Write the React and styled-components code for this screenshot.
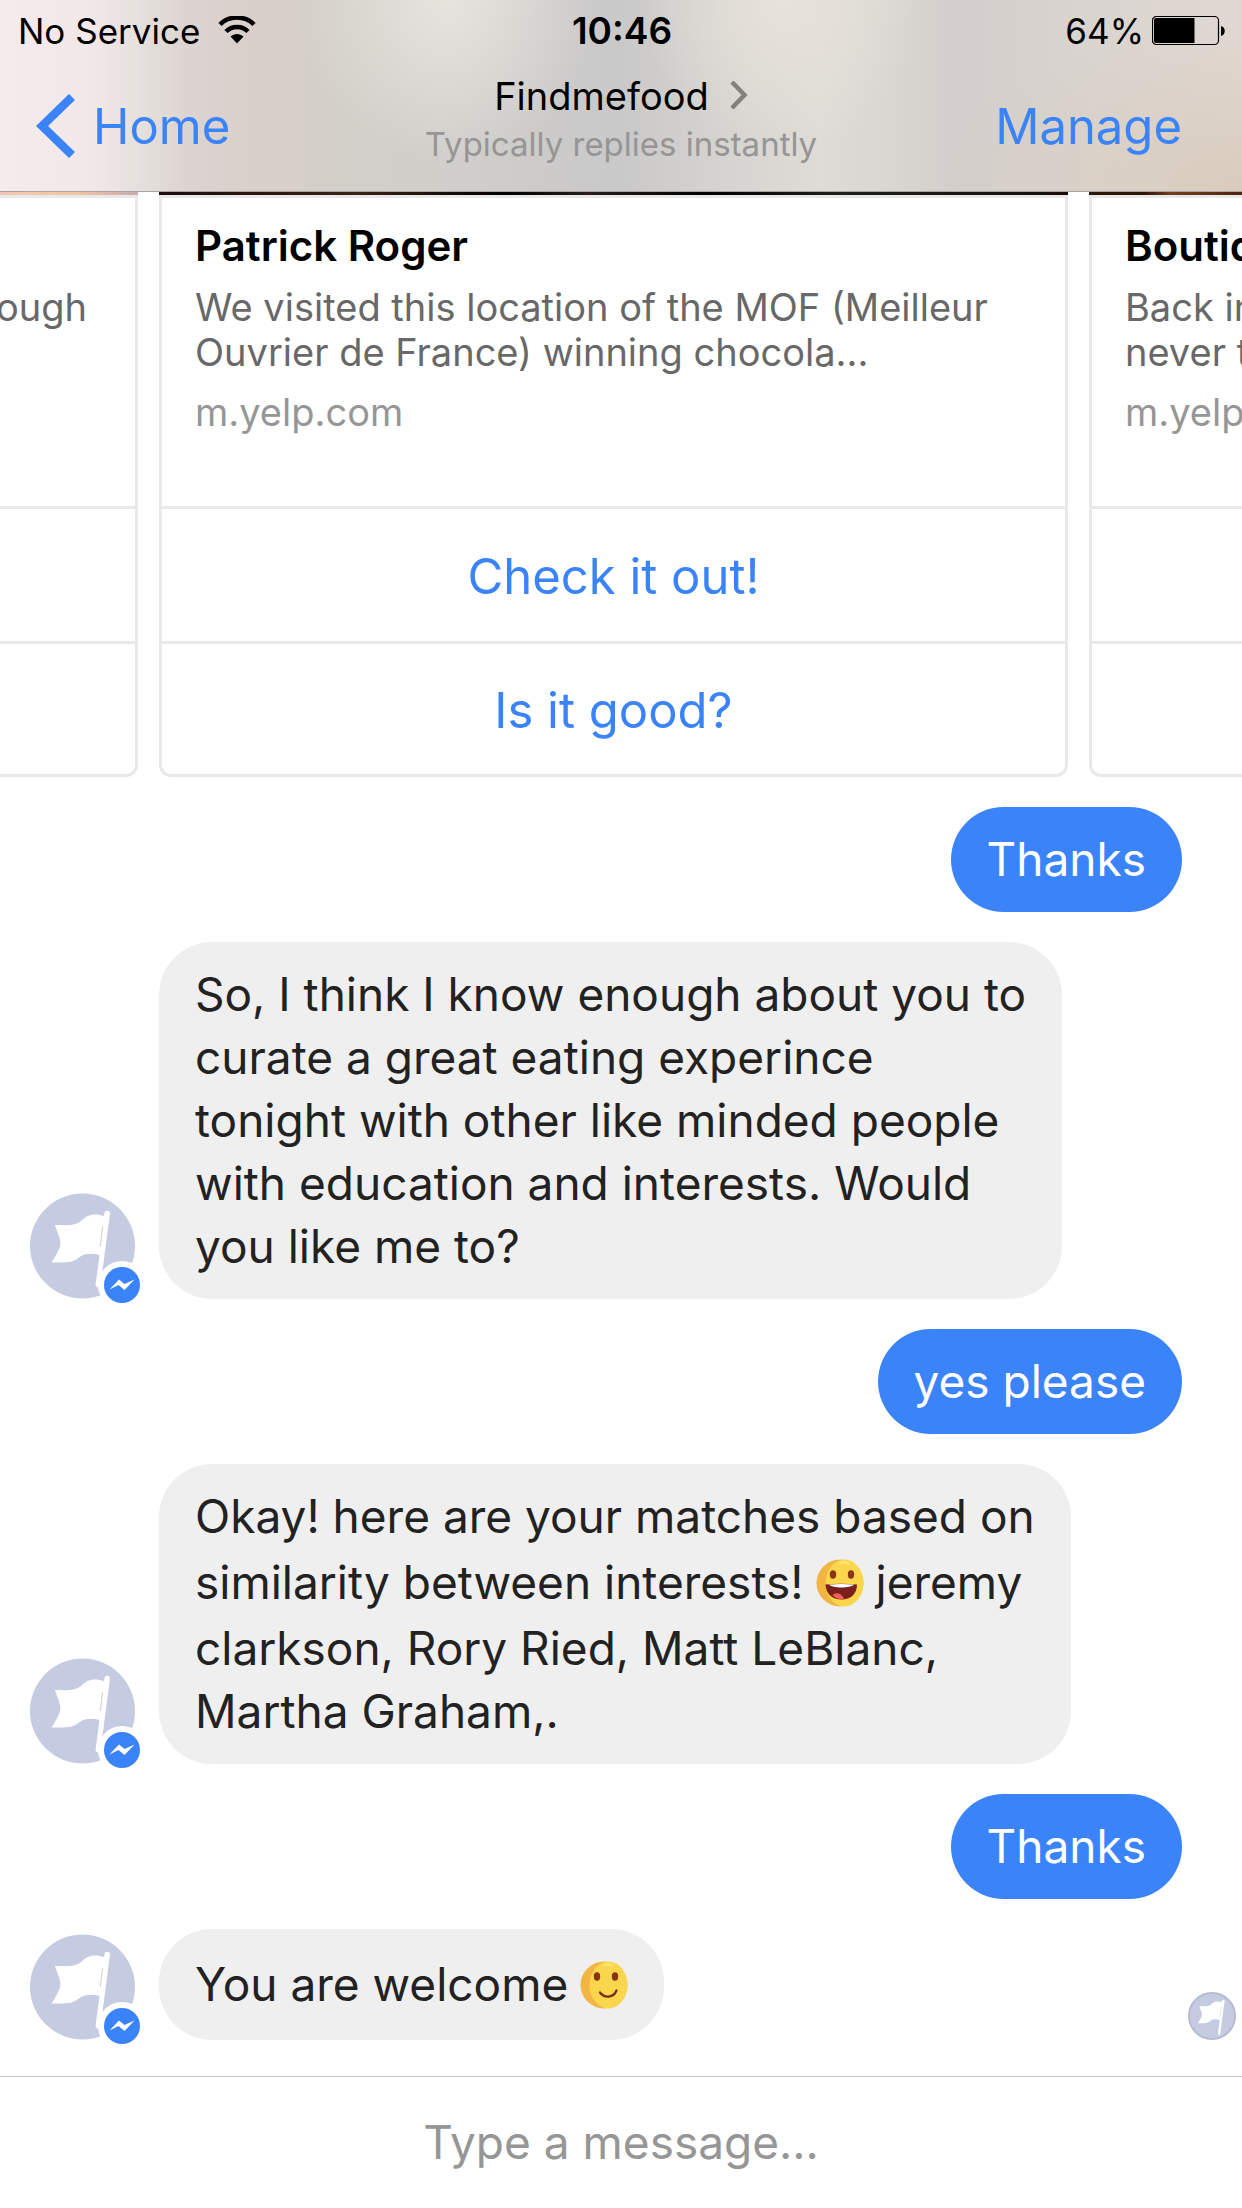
import React from "react";
import styled, { createGlobalStyle } from "styled-components";

const GlobalStyle = createGlobalStyle`
  *, *::before, *::after { box-sizing: border-box; }
  body {
    margin: 0;
    background: #fff;
    color: #222;
    font-family: Inter, "Liberation Sans", sans-serif;
    font-size: 46px;
    line-height: 63px;
  }
  button, input { font: inherit; color: inherit; }
  h1, h2, p { margin: 0; font: inherit; }
`;

const BLUE = "#3b83f8";

const Screen = styled.div`
  min-height: 100vh;
  display: flex;
  flex-direction: column;
  overflow: hidden;
`;

const Header = styled.header`
  height: 192px;
  display: flex;
  flex-direction: column;
  background:
    radial-gradient(ellipse 150px 160px at 36% 0, #e6e4dd 0%, #e6e4dd00 100%),
    radial-gradient(ellipse 140px 150px at 63% 0, #e7e3da 0%, #e7e3da00 100%),
    radial-gradient(ellipse 300px 170px at 100% 100%, #d9ccbd 0%, #d9ccbd00 100%),
    linear-gradient(90deg, #f6ebeb 0%, #f3e8e9 7%, #e6e1de 11%, #dcd4d0 15%, #d8cfca 21%, #d3cfc9 28%,
      #d1cfcb 36%, #cccbca 44%, #cac9c9 50%, #d4d2cf 57%, #dfdcd7 66%, #dad7d3 71%, #d3cecb 77%,
      #d9d4d0 87%, #e1d8d2 100%);
  box-shadow: inset 0 -1px 0 #a9a4a2;
`;

const StatusBar = styled.div`
  height: 62px;
  padding: 0 16px 0 18px;
  display: grid;
  grid-template-columns: 1fr auto 1fr;
  align-items: center;
  color: #000;
  font-size: 35px;
  line-height: 62px;
`;

const StatusGroup = styled.div`
  display: flex;
  align-items: center;
  justify-content: ${(p) => (p.$end ? "flex-end" : "flex-start")};
  gap: ${(p) => (p.$end ? 8 : 18)}px;
`;

const Clock = styled.time`
  font-size: 37px;
  font-weight: 600;
`;

const NavBar = styled.nav`
  flex: 1;
  padding: 0 36px;
  display: grid;
  grid-template-columns: 1fr auto 1fr;
`;

const NavButton = styled.button`
  justify-self: ${(p) => (p.$end ? "end" : "start")};
  align-self: start;
  height: 128px;
  padding: 0 ${(p) => (p.$end ? 24 : 0)}px 0 0;
  border: 0;
  background: none;
  display: flex;
  align-items: center;
  gap: 18px;
  color: ${BLUE};
  font-size: 49px;
`;

const NavTitle = styled.div`
  display: flex;
  flex-direction: column;
  align-items: center;
  padding-top: 10px;
`;

const Title = styled.h1`
  display: flex;
  align-items: center;
  gap: 21px;
  color: #000;
  font-size: 38px;
  line-height: 48px;
`;

const Subtitle = styled.p`
  color: #969594;
  font-size: 33px;
  line-height: 48px;
`;

const Carousel = styled.section`
  display: flex;
  justify-content: center;
  gap: 21px;
  padding-right: 15px;
`;

const Card = styled.article`
  flex: 0 0 calc(100% - 318px);
  display: flex;
  flex-direction: column;
  border: 3px solid #e9e9e9;
  border-top: 0;
  border-radius: 0 0 12px 12px;
`;

const Photo = styled.div`
  height: 3px;
  margin: 0 -3px;
  background: ${(p) => p.$tone};
`;

const CardBody = styled.div`
  height: 311px;
  padding: 21px 48px 0 33px;
  border-top: 3px solid #e9e9e9;
  text-align: ${(p) => (p.$end ? "right" : "left")};
`;

const CardTitle = styled.h2`
  min-height: 60px;
  color: #000;
  font-size: 42px;
  font-weight: 600;
  line-height: 54px;
  white-space: nowrap;
`;

const CardText = styled.p`
  padding-top: 6px;
  color: #686868;
  font-size: 38px;
  line-height: 45px;
  white-space: nowrap;
`;

const CardLink = styled.a`
  display: block;
  padding-top: 15px;
  color: #969696;
  font-size: 38px;
  line-height: 45px;
  text-decoration: none;
`;

const CardAction = styled.button`
  height: 135px;
  padding: 2px 0 0;
  border: 0;
  border-top: 3px solid #e9e9e9;
  background: none;
  color: ${BLUE};
  font-size: 49px;
  &:last-child { height: 133px; }
`;

const Thread = styled.main`
  position: relative;
  flex: 1;
  display: flex;
  flex-direction: column;
  gap: 30px;
  padding: 30px 60px 36px 30px;
`;

const Row = styled.div`
  display: flex;
  align-items: flex-end;
  justify-content: ${(p) => (p.$mine ? "flex-end" : "flex-start")};
  gap: 24px;
`;

const Bubble = styled.p`
  padding: 21px 36px;
  border-radius: 53px;
  background: ${(p) => (p.$mine ? BLUE : "#efefef")};
  color: ${(p) => (p.$mine ? "#fff" : "#222")};
  white-space: nowrap;
`;

const Line = styled.span`
  display: flex;
  align-items: center;
  gap: 12px;
`;

const EmojiBox = styled.span`
  height: 69px;
  display: flex;
  align-items: center;
`;

const Seen = styled.div`
  position: absolute;
  right: 6px;
  bottom: 36px;
  display: flex;
`;

const Composer = styled.form`
  height: 132px;
  border-top: 1px solid #c8c8c8;
  display: flex;
`;

const MessageInput = styled.input`
  flex: 1;
  min-width: 0;
  border: 0;
  padding: 0;
  outline: 0;
  background: none;
  text-align: center;
  &::placeholder { color: #969696; opacity: 1; }
`;

const Flag = () => (
  <g fill="#fff">
    <path d="M25 31c10 0 17 1 23-2 5-3 7-7 13-8 5-1 9 0 13 1l.6-3.500c.4-2.400 5.800-2.400 5.400 1L70.500 92c-.5 2-5 2-5-1L69.500 61c-7-2-14-2-20 2-6 5-11 6-28 5.500 3-5 6-9 8.500-16 2-6-3-14-5-21.500z" />
    <path d="M72.600 33 70.300 52" stroke="#d3d3da" strokeWidth="1.200" fill="none" />
  </g>
);

const Avatar = () => (
  <svg width="105" height="105" viewBox="0 0 105 105" overflow="visible" role="img" aria-label="Findmefood">
    <circle cx="52.500" cy="52" r="52.500" fill="#c5cbe0" />
    <Flag />
    <circle cx="92" cy="91" r="24" fill="#fff" />
    <circle cx="92" cy="91" r="18" fill={BLUE} />
    <path d="M79.500 95.500 89 85.500l5.500 4.500 10-4.500L94.500 96l-6-5z" fill="#fff" />
  </svg>
);

const SeenAvatar = () => (
  <svg width="48" height="48" viewBox="0 0 105 105" role="img" aria-label="Seen">
    <circle cx="52.500" cy="52.500" r="50.500" fill="#c5cbe0" stroke="#b3b9cf" strokeWidth="4" />
    <Flag />
  </svg>
);

const Face = ({ grin }) => (
  <svg width="48" height="48" viewBox="0 0 48 48" role="img" aria-label={grin ? "grinning" : "smiling"}>
    <circle cx="24" cy="24" r="23.500" fill="#f2b544" />
    <ellipse cx="28.500" cy="24" rx="19" ry="23.500" fill="#f9d64c" />
    <path d="M24 4.500c2-1.800 6-1.800 8 0" stroke="#fdea7a" strokeWidth="2" fill="none" strokeLinecap="round" />
    <ellipse cx="17" cy="15.500" rx="3.200" ry="4.200" fill="#8a3416" />
    <ellipse cx="35" cy="15.500" rx="3.200" ry="4.200" fill="#8a3416" />
    {grin ? (
      <>
        <path d="M9.500 25.500c10-1 21-1 31.500 0 0 9-6 15-15.500 15s-15.500-6-16-15z" fill="#7a1f1d" />
        <path d="M13 25.500c8-.8 17-.8 25 0-3 4-22 4-25 0z" fill="#fff" />
        <path d="M16.500 36c4-3.500 9-2 11.500 4-4 1-8.500-.5-11.500-4z" fill="#f2605a" />
      </>
    ) : (
      <path d="M20 31.500c4.500 6 13.500 5.500 16.500-2" stroke="#7b2a17" strokeWidth="2.200" fill="none" strokeLinecap="round" />
    )}
  </svg>
);

const Emoji = ({ grin }) => (
  <EmojiBox>
    <Face grin={grin} />
  </EmojiBox>
);

const Wifi = () => (
  <svg width="38" height="30" viewBox="0 0 38 30" aria-hidden="true">
    <path d="M2 8.500C11-.8 27-.8 36 8.500" fill="none" stroke="#000" strokeWidth="4.500" />
    <path d="M8 15.500c6-6 16-6 22 0" fill="none" stroke="#000" strokeWidth="4.500" />
    <path d="M12.500 20.500c4-3.500 9-3.500 13 0L19 27.500z" />
  </svg>
);

const Battery = () => (
  <svg width="74" height="30" viewBox="0 0 74 30" aria-hidden="true">
    <rect x=".5" y=".5" width="66" height="28" rx="4" fill="none" stroke="#000" strokeWidth="1.200" />
    <path d="M4 2h38.500v25H4a2 2 0 0 1-2-2V4a2 2 0 0 1 2-2z" />
    <path d="M69 10c5 1 5 9 0 10z" />
  </svg>
);

const BackChevron = () => (
  <svg width="39" height="64" viewBox="0 0 39 64" aria-hidden="true">
    <path d="M36 3 6 32l30 29" fill="none" stroke={BLUE} strokeWidth="8.500" />
  </svg>
);

const TitleChevron = () => (
  <svg width="18" height="30" viewBox="0 0 18 30" aria-hidden="true">
    <path d="M2 1l12.500 13L2 27" fill="none" stroke="#86807d" strokeWidth="4.500" />
  </svg>
);

const CARDS = [
  { tone: "linear-gradient(90deg, #f0c8b4 84%, #f3c6a2 93%, #c9aab0)", text: ["ough"], end: true },
  {
    tone: "linear-gradient(90deg, #1c0d0a, #3a2215 22%, #000 38%, #2a1f18 47%, #000 60%, #20201c 75%, #190d0a)",
    title: "Patrick Roger",
    text: ["We visited this location of the MOF (Meilleur", "Ouvrier de France) winning chocola..."],
    link: "m.yelp.com",
    actions: ["Check it out!", "Is it good?"],
  },
  {
    tone: "linear-gradient(90deg, #2a1a0c, #2c1408 6%, #74401f 9%, #4a2410 17%)",
    title: "Boutique",
    text: ["Back in", "never the"],
    link: "m.yelp.com",
  },
];

const MESSAGES = [
  { mine: true, lines: ["Thanks"] },
  {
    lines: [
      "So, I think I know enough about you to",
      "curate a great eating experince",
      "tonight with other like minded people",
      "with education and interests. Would",
      "you like me to?",
    ],
  },
  { mine: true, lines: ["yes please"] },
  {
    lines: [
      "Okay! here are your matches based on",
      <>similarity between interests! <Emoji grin /> jeremy</>,
      "clarkson, Rory Ried, Matt LeBlanc,",
      "Martha Graham,.",
    ],
  },
  { mine: true, lines: ["Thanks"] },
  { lines: [<>You are welcome <Emoji /></>] },
];

export default function App() {
  return (
    <Screen>
      <GlobalStyle />
      <Header>
        <StatusBar>
          <StatusGroup>No Service <Wifi /></StatusGroup>
          <Clock>10:46</Clock>
          <StatusGroup $end>64% <Battery /></StatusGroup>
        </StatusBar>
        <NavBar>
          <NavButton type="button"><BackChevron />Home</NavButton>
          <NavTitle>
            <Title>Findmefood <TitleChevron /></Title>
            <Subtitle>Typically replies instantly</Subtitle>
          </NavTitle>
          <NavButton type="button" $end>Manage</NavButton>
        </NavBar>
      </Header>
      <Carousel>
        {CARDS.map((card, i) => (
          <Card key={i}>
            <Photo $tone={card.tone} />
            <CardBody $end={card.end}>
              <CardTitle>{card.title}</CardTitle>
              <CardText>
                {card.text.map((t) => <React.Fragment key={t}>{t}<br /></React.Fragment>)}
              </CardText>
              {card.link && <CardLink href="#yelp">{card.link}</CardLink>}
            </CardBody>
            {(card.actions || ["", ""]).map((label, n) => (
              <CardAction key={n} type="button" aria-label={label || "Card action"}>{label}</CardAction>
            ))}
          </Card>
        ))}
      </Carousel>
      <Thread>
        {MESSAGES.map((m, i) => (
          <Row key={i} $mine={m.mine}>
            {!m.mine && <Avatar />}
            <Bubble $mine={m.mine}>
              {m.lines.map((line, n) => <Line key={n}>{line}</Line>)}
            </Bubble>
          </Row>
        ))}
        <Seen><SeenAvatar /></Seen>
      </Thread>
      <Composer>
        <MessageInput type="text" placeholder="Type a message..." aria-label="Type a message" />
      </Composer>
    </Screen>
  );
}
